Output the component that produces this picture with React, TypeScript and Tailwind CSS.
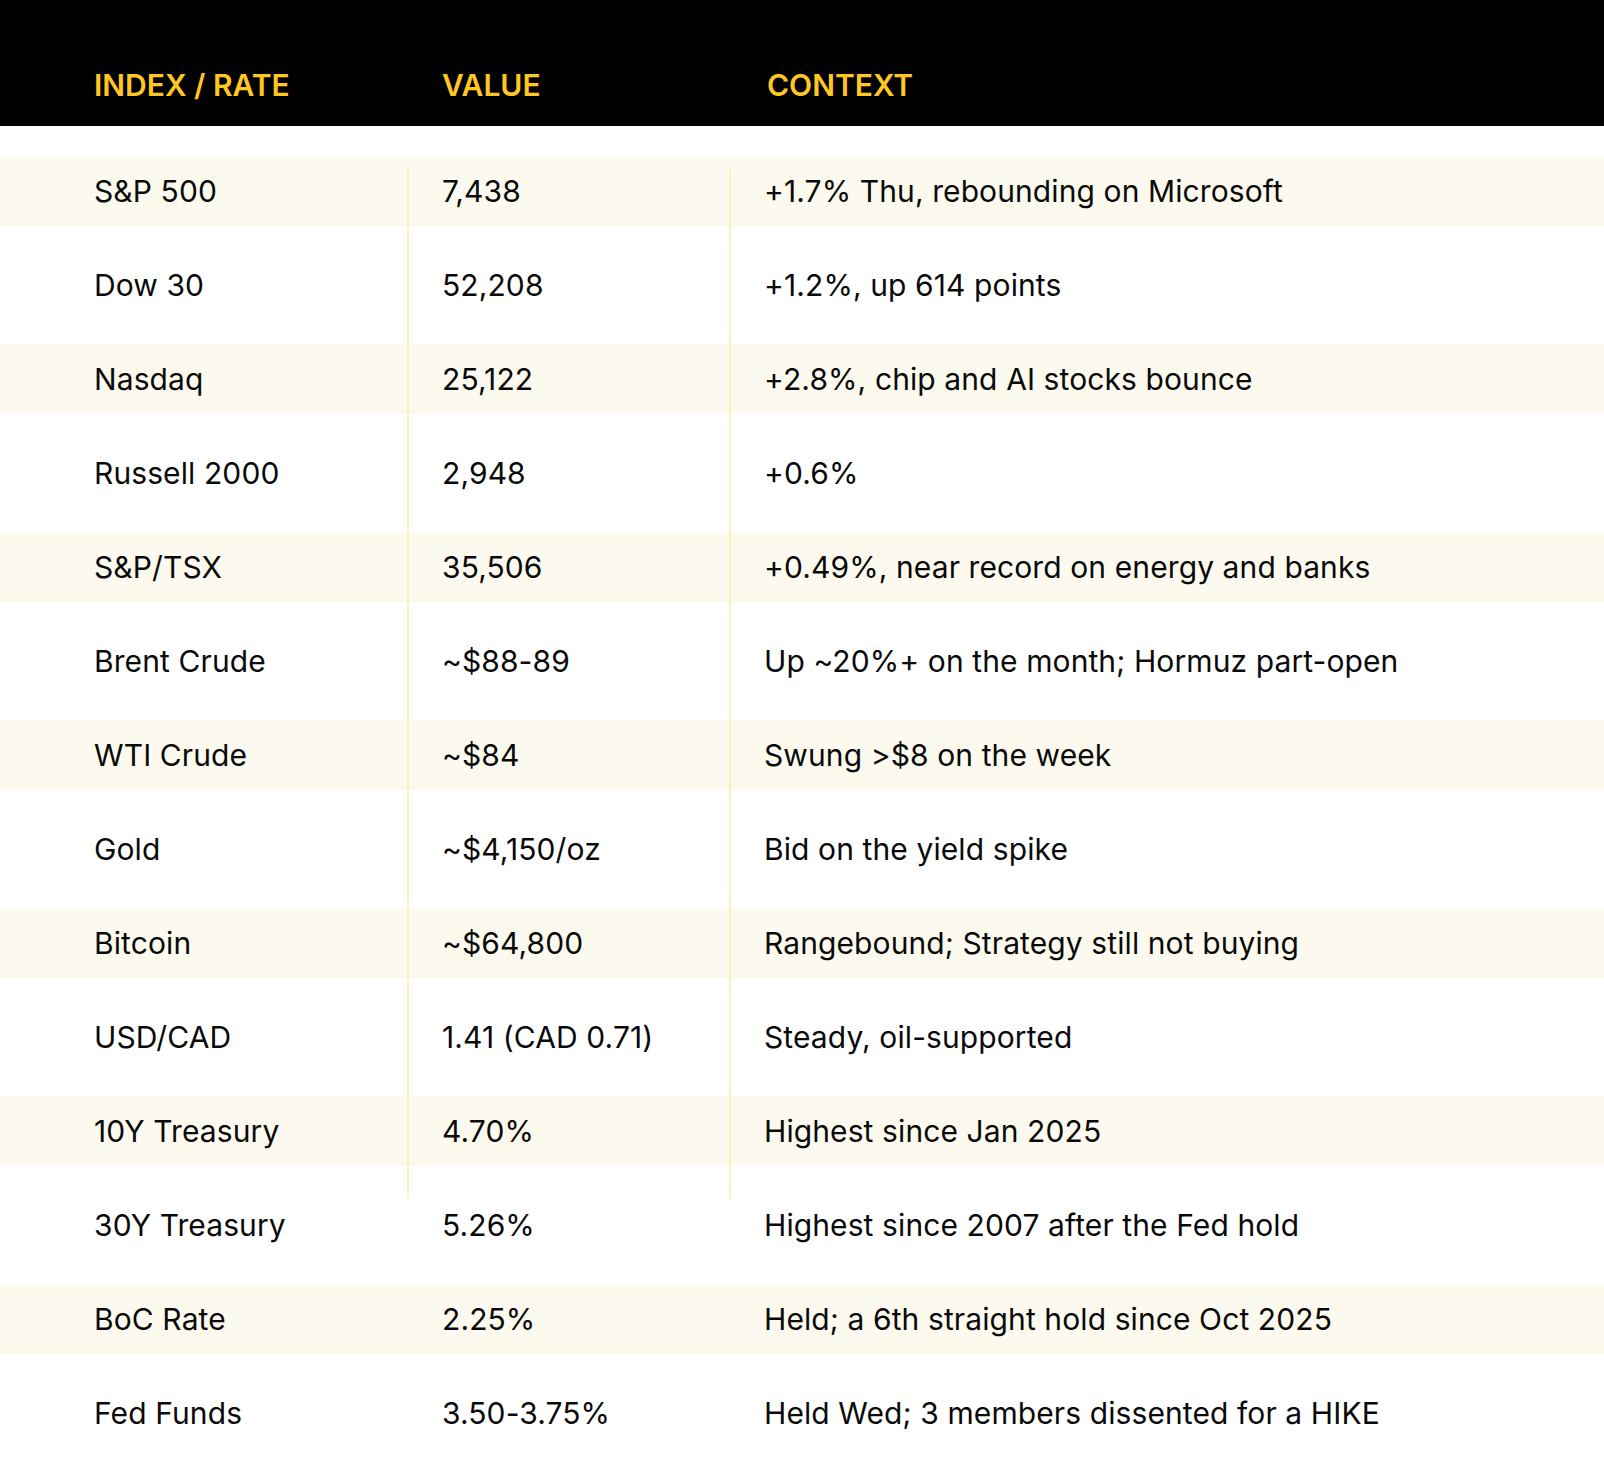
import React from "react";

const rows: [string, string, string][] = [
  ["S&P 500", "7,438", "+1.7% Thu, rebounding on Microsoft"],
  ["Dow 30", "52,208", "+1.2%, up 614 points"],
  ["Nasdaq", "25,122", "+2.8%, chip and AI stocks bounce"],
  ["Russell 2000", "2,948", "+0.6%"],
  ["S&P/TSX", "35,506", "+0.49%, near record on energy and banks"],
  ["Brent Crude", "~$88-89", "Up ~20%+ on the month; Hormuz part-open"],
  ["WTI Crude", "~$84", "Swung >$8 on the week"],
  ["Gold", "~$4,150/oz", "Bid on the yield spike"],
  ["Bitcoin", "~$64,800", "Rangebound; Strategy still not buying"],
  ["USD/CAD", "1.41 (CAD 0.71)", "Steady, oil-supported"],
  ["10Y Treasury", "4.70%", "Highest since Jan 2025"],
  ["30Y Treasury", "5.26%", "Highest since 2007 after the Fed hold"],
  ["BoC Rate", "2.25%", "Held; a 6th straight hold since Oct 2025"],
  ["Fed Funds", "3.50-3.75%", "Held Wed; 3 members dissented for a HIKE"],
];

export default function App() {
  return (
    <div
      className="w-[1604px] min-h-[1474px] bg-white text-[#0a0a0a]"
      style={{ fontFamily: "Inter, 'Noto Sans', sans-serif" }}
    >
      <div className="h-[126px] bg-black pt-[67px] grid grid-cols-[408px_322px_1fr] text-[30px] leading-[36px] font-semibold text-[#FFC720]">
        <div className="pl-[94px]">INDEX / RATE</div>
        <div className="pl-[34px]">VALUE</div>
        <div className="pl-[37px]">CONTEXT</div>
      </div>
      <div className="relative mt-[30px] flex flex-col gap-[24px]">
        {rows.map((r, i) => (
          <div
            key={i}
            className={`h-[70px] grid grid-cols-[408px_322px_1fr] items-center text-[30px] leading-[36px] font-normal tracking-[0.1px] ${
              i % 2 === 0 ? "bg-[#FCFAEE]" : "bg-white"
            }`}
          >
            <div className="pl-[94px]">{r[0]}</div>
            <div className="pl-[34px]">{r[1]}</div>
            <div className="pl-[34px]">{r[2]}</div>
          </div>
        ))}
        <div className="absolute left-[407px] top-[13px] h-[1030px] w-[2px] bg-[#FDF0B8]" />
        <div className="absolute left-[729px] top-[13px] h-[1030px] w-[2px] bg-[#FDF0B8]" />
      </div>
    </div>
  );
}
